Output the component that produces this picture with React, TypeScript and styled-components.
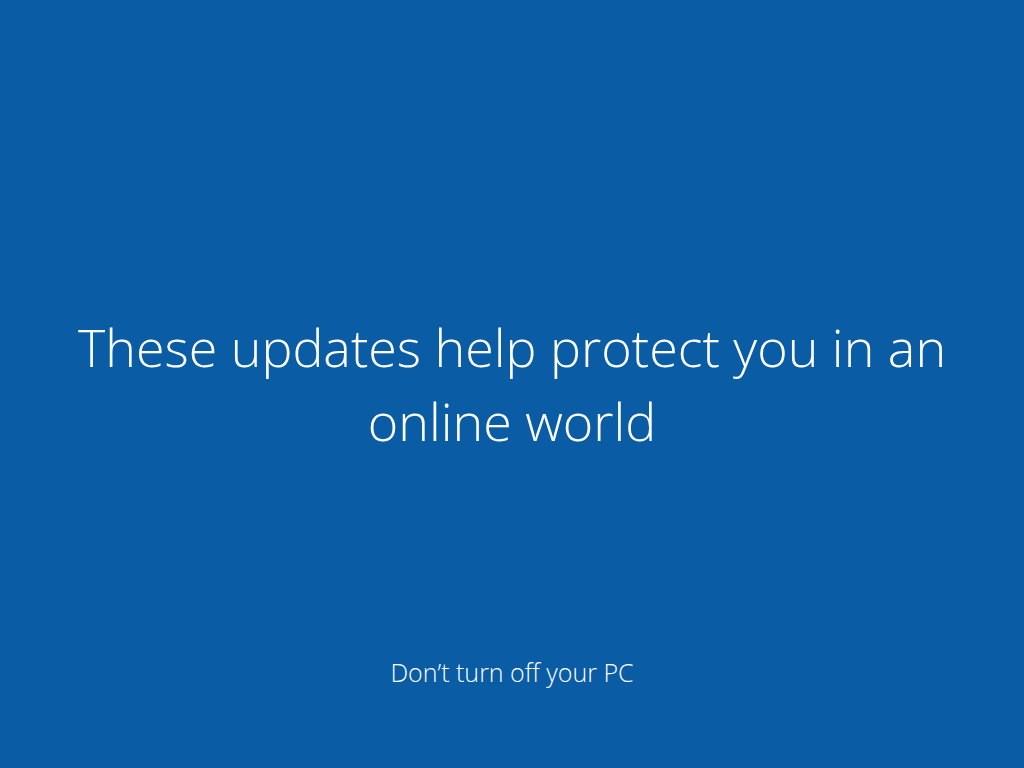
import styled, { createGlobalStyle } from "styled-components";

const GlobalStyle = createGlobalStyle`
  html, body {
    margin: 0;
    padding: 0;
    height: 100%;
    background: #0a5ca4;
  }
  #root {
    height: 100%;
  }
`;

function App() {
  return (
    <>
      <GlobalStyle />
      <Screen>
        <Middle>
          <Message>These updates help protect you in an online world</Message>
        </Middle>
        <Footer>Don’t turn off your PC</Footer>
      </Screen>
    </>
  );
}

export default App;

const Screen = styled.div`
  height: 768px;
  display: flex;
  flex-direction: column;
  align-items: center;
  background: #0a5ca4;
  color: #ffffff;
  font-family: "Open Sans", "Noto Sans", sans-serif;
  font-weight: 300;
`;

const Middle = styled.div`
  flex: 1;
  display: flex;
  align-items: center;
  justify-content: center;
  padding-top: 112px;
`;

const Message = styled.h1`
  margin: 0;
  width: 900px;
  text-align: center;
  font-size: 52px;
  font-weight: 300;
  line-height: 74px;
`;

const Footer = styled.div`
  font-size: 25px;
  line-height: 32px;
  padding-bottom: 80px;
`;
